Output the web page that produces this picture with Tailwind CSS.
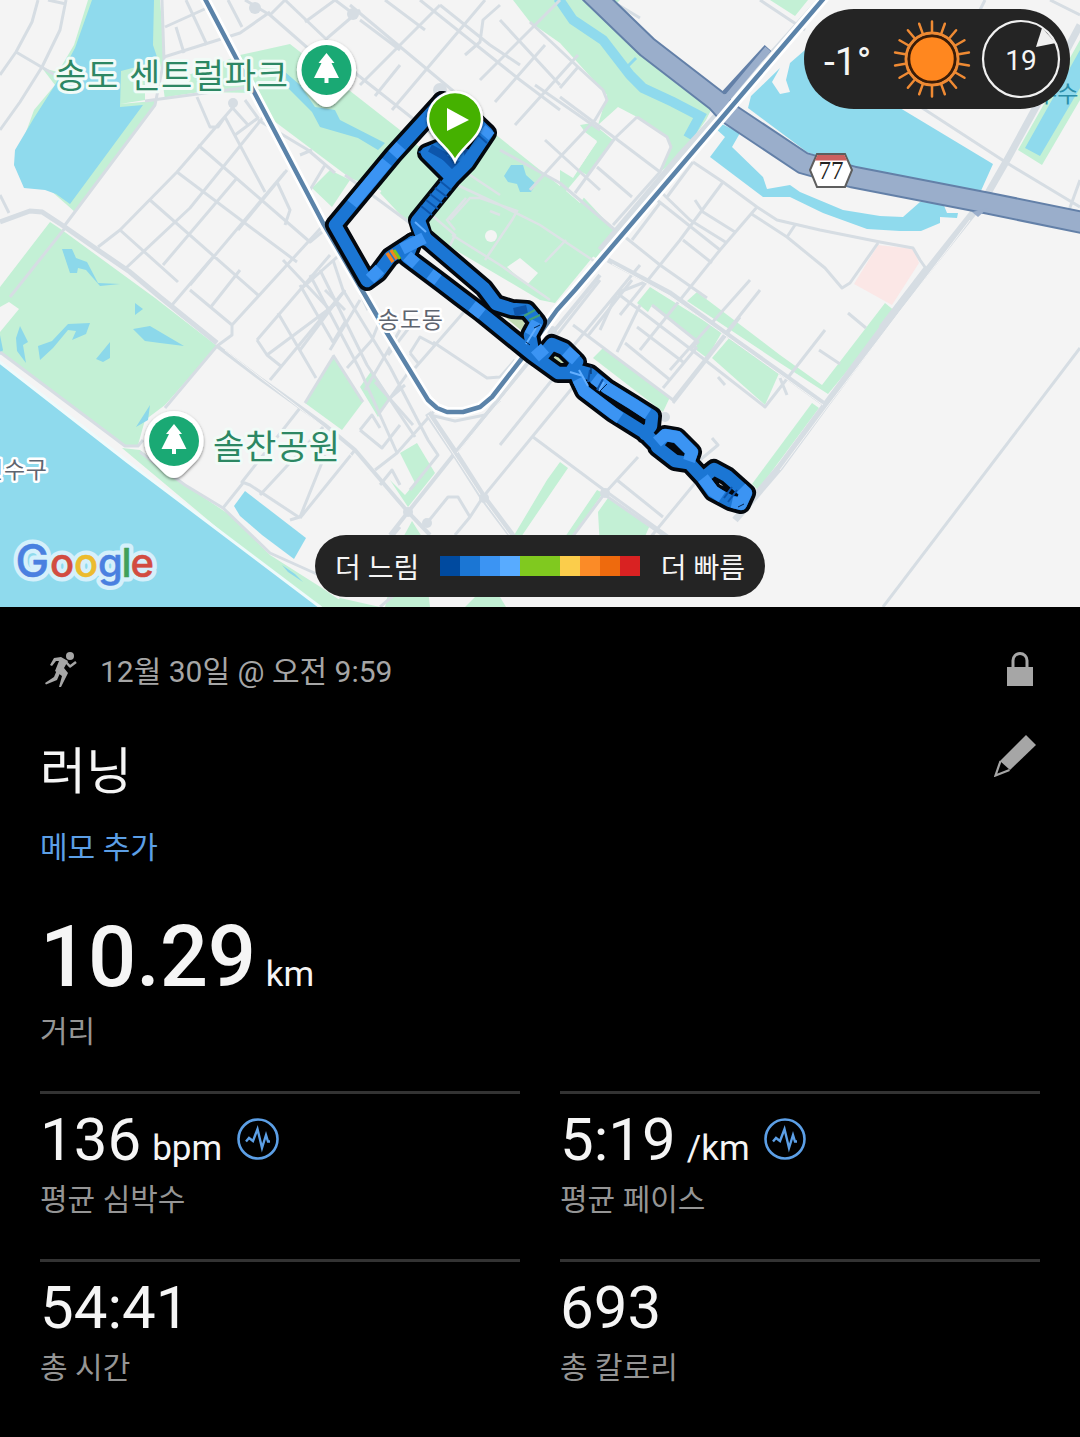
<!DOCTYPE html>
<html lang="ko">
<head>
    <meta charset="UTF-8">
    <meta name="viewport" content="width=device-width, initial-scale=1.0">
    <title>러닝</title>
    <script src="https://cdn.jsdelivr.net/npm/@tailwindcss/browser@4"></script>
</head>
<body class="bg-black text-[#f5f5f5] font-[Roboto,'Noto_Sans_CJK_KR',sans-serif]">

    <!-- MAP -->
    <section class="relative h-[607px] overflow-hidden bg-[#f4f4f4]">
        <svg class="block" width="1080" height="607" viewBox="0 0 1080 607" fill="none">
            <!-- parks -->
            <g fill="#c3f0d5">
                <path d="M88 0H160L165 60L155 106L75 212L50 190L14 165L34 110L55 85L42 68L58 72L74 45Z"/>
                <path d="M50 222L62 230L155 298L217 346L165 405L145 420L138 445L125 447L0 352V287Z"/>
                <path d="M122 448L140 450L185 485L230 515L270 555L322 588L350 607H312Z"/>
                <path d="M513 0L530 22L560 43L607 95L598 125L618 107L637 117L668 137L670 147L660 172L680 157L706 120L712 108L585 0Z"/>
                <path d="M155 88L240 55L290 44L400 130L440 165L490 130L615 230L555 303L540 300L435 238L418 215L380 190L350 178L270 118L258 93L200 92L160 98Z"/>
                <path d="M312 188L330 170L350 180L332 207Z M380 193L397 170L450 170L410 225Z"/>
                <path d="M575 0H620L600 20Z M770 0H808L795 16Z"/>
                <path d="M333 357L363 402L342 430L305 403Z M372 370L390 398L378 417L360 387Z"/>
                <path d="M400 453L417 443L435 473L408 507L390 480L405 495L415 483Z"/>
                <path d="M547 480L560 462L568 468L555 487L521 537H513Z"/>
                <path d="M597 490L603 493L572 537H565Z M608 498L630 511L650 525L640 548H600L598 512Z"/>
                <path d="M593 358L603 348L670 397L663 412Z"/>
                <path d="M637 303L650 287L722 332L707 358L695 349L698 342L652 305L648 312Z"/>
                <path d="M687 301L697 292L780 355L822 385L885 303L896 312L828 394L780 363Z"/>
                <path d="M712 358L730 337L780 371L765 405Z"/>
                <path d="M812 403L819 408L758 490L752 484Z"/>
                <path d="M580 125L592 123L613 140L575 192L560 182V170L573 178L597 141L585 132Z"/>
                <path d="M1018 150L1042 165L1080 100V40Z"/>
                <path d="M400 543L412 521L422 537L430 607H385Z M465 607L475 597H500L506 607Z M330 607L340 598L380 607Z"/>
                <path d="M560 172L616 232L596 258L560 238Z"/>
            </g>
            <path d="M878 245L914 249L919 263L892 305L854 284Z" fill="#fbe7e6"/>
            <g fill="#f4f4f4">
                <path d="M507 267L520 258L538 273L527 285Z M0 307L9 302L19 309L0 332Z"/>
                <circle cx="491" cy="236" r="6"/>
                <path d="M582 172L596 181L580 203L566 191Z M120 104L145 100V68L160 62L165 100Z"/>
                <path d="M560 150L583 133L597 142L573 177L560 168Z"/>
            </g>

            <!-- water -->
            <g fill="#8fdaed">
                <path d="M92 0H154L153 45L158 60L140 66L121 71L120 107L143 105L70 204L56 194L45 190L24 188L14 165L15 150L34 118L55 85L75 48Z"/>
                <path d="M-8 356L128 462L320 607L328 614H-8Z" stroke="#eefafb" stroke-width="3"/>
                <path d="M245 491L306 538L294 559L262 535L240 516L234 506Z"/>
                <path d="M805 50L790 63L786 80L790 92L780 94L772 82L780 68L751 96L748 108L807 152L853 170L980 193L993 164L900 108L860 60Z"/>
                <path d="M715 128L725 137L710 157L763 197L790 197L823 213L867 229L900 231H921L940 223V217L957 218L958 213L947 213L943 203L920 202L903 217L880 216L843 210L800 192L790 185L767 189L763 177L732 147L740 133L720 123Z"/>
                <path d="M1025 148L1040 156L1080 88V50Z"/>
            </g>
            <path d="M558 -2L573 20L603 40L630 75L643 88L673 102L700 116L688 138" stroke="#8fdaed" stroke-width="10"/>
            <path d="M628 66L636 58" stroke="#8fdaed" stroke-width="3"/>
            <g fill="#8cd8ea">
                <path d="M62 249H72L76 258L87 262L98 283L120 284L100 286L86 270L78 268L77 273H70Z"/>
                <path d="M16 338L20 326L28 342L23 345L26 363L17 351Z M38 346L52 341L68 324L90 323L86 334L72 340L76 331L68 330L53 348L40 360Z M96 359L110 342V358L103 362Z M133 329L150 326L184 346L160 343L145 341Z M135 303L143 309L135 315Z M136 427L150 405L148 420Z M0 335L3 350L0 355Z"/>
                <path d="M285 72L300 85L315 107L335 110L340 120L385 143L378 150L358 138L320 127L312 112L288 88Z"/>
                <path d="M504 176L511 165H523L526 175L536 184L531 192L520 192L517 184L508 182Z M282 565L295 574L303 582L288 572Z"/>
            </g>

            <!-- local roads -->
            <g stroke="#d6dde3" stroke-width="3" stroke-linejoin="round">
                <path d="M38 0L32 22L16 52L0 75M66 0L60 30L42 67L20 102L0 130M48 0L66 4M16 52L55 75M0 195L9 213"/>
                <path d="M162 0L164 60L155 105L65 225M165 27L207 8M186 0L207 45M176 27L184 53M164 57L240 33L270 12M145 101L250 87M228 0L242 27M245 0L270 15L310 50M270 15L285 0M285 0L325 38M305 22L335 0M335 0L355 15M360 10L325 40"/>
                <path d="M98 247L120 230L177 172L235 105M126 268L190 208L265 115M163 265L237 178M190 285L285 172M150 200L258 295M177 172L297 262M198 145L310 242L322 232M197 97L210 127H218L225 117L265 192M230 105L248 125M245 100L258 118L235 135M120 230L178 282M287 170L238 230M277 182L290 210L285 225"/>
                <path d="M258 120L308 150L335 173M345 175L410 223M300 155L312 150M325 165L310 190"/>
                <path d="M172 305L213 257M190 290L232 325V335L217 346L165 408M210 308L240 270M232 325L330 218M257 340L330 255M257 340L267 355L282 367M267 355L337 303M270 380L345 290M316 378L278 313M300 290L345 250"/>
                <path d="M300 285L333 342L345 322M310 275L360 370L397 453L435 410M320 270L367 365L415 437M333 260L343 290L390 367L428 440L438 455L410 490M345 290L300 350M360 300L330 350M333 357L305 403M333 355L363 402M347 368L372 340L380 320M365 390L400 330M378 415L410 370M390 398L405 385M360 430L372 415L380 428M360 430L382 448L400 425M375 470L397 453M380 485L392 470L400 485"/>
                <path d="M345 310L325 290M342 255L368 310M283 260L330 310M355 450L300 518M300 518L250 485L242 482L300 408M260 495L325 425M325 455L300 517L290 520M223 508L243 483"/>
                <path d="M375 382L413 425M388 355L415 320M433 342L487 378L500 377L515 360M415 368L477 297M410 353L420 337L435 345M410 353L418 363M483 497L573 387M533 437L600 487L680 545M427 523L448 497H458L470 517L483 497M470 517L455 535M430 415L455 421L485 415L500 400"/>
                <path d="M345 65L440 140M360 85L395 50L425 20L440 5M375 96L400 65M392 110L485 0M350 5L470 105M360 20L400 50M385 0L425 30M440 5L490 45M420 0L520 80L560 110M500 20L560 85M465 55L480 42L483 20L500 5M480 80L560 0M495 102L545 45M515 125L578 55M490 45L520 65M535 85L600 130"/>
                <path d="M560 88L578 67M530 22L578 67L603 90L607 100L595 120L560 157L530 190M560 97L615 138L660 172M637 117L667 137L671 147L660 172L613 225M637 117L615 138L575 193M597 167L632 197M560 183L615 230M500 150L560 183M545 140L600 190"/>
                <path d="M693 162L667 197M693 162L723 182L757 207L777 220L820 230L880 242L913 248L920 260L927 270M757 207L720 250L640 350M750 213L787 237L825 268L842 288L850 283L878 243M787 237L795 225M723 182L680 240L620 315M660 203L632 240M662 193L690 220L727 243M657 200L720 250M695 200L703 212L735 232M683 240L712 263M625 237L660 265L707 298M750 280L670 370"/>
                <path d="M617 293L705 360L765 407L825 330M640 305L617 352M573 325L673 400L760 290M632 280L587 337M625 343L670 380M637 327L683 362M697 347L663 388M652 305L698 342L690 350M740 317L673 403M725 385L718 377M848 313L866 328M819 350L840 364M787 395L780 378"/>
                <path d="M638 457L605 493L570 540M617 480L663 517M700 477L640 550M605 495L670 540M712 438L718 445L700 460M650 280L617 293L600 330M600 280L545 350M640 265L570 350M560 370L500 445"/>
                <path d="M910 100L1007 163L1080 207M1080 180L1068 213M985 0L980 10M1050 0L1080 15M610 0L640 18M760 0L793 22L805 30M880 327L925 268M1080 348L883 607"/>
                <path d="M65 228L10 297M0 352L125 446L138 446L143 440M140 452L185 485L223 508L270 553L330 580M385 545L400 527M380 607L400 590"/>
            </g>
            <g stroke="#d6dde3" stroke-width="6">
                <path d="M0 222L30 211L42 212L62 225L95 248L130 272L160 297L217 343" stroke-width="5"/>
                <path d="M217 346L262 380L325 425L355 450L408 512L430 535M390 535L408 512L455 453L518 375L600 275" stroke-width="4"/>
                <path d="M428 413L455 453L483 497L513 537" stroke-width="7"/>
                <path d="M608 260L670 293L735 340L780 372L823 403" stroke-width="5"/>
                <path d="M1080 25L1047 87L1007 160L984 200L973 213L900 305L827 403L780 467L735 520" stroke-width="7"/>
                <path d="M820 0L705 128L680 155L600 250" />
            </g>
            <path d="M428 415L483 499L511 537M612 264L670 296L823 405M970 220L827 407L780 470M225 350L325 428L405 512M457 453L520 377" stroke="#f4f4f4"/>
            <path d="M436 175L500 205L540 225L600 265M420 205L455 235L448 250M450 220L470 198H480L517 211L512 220L485 260M452 235L500 265L550 300M455 230L447 220L466 198M490 211L500 215M566 240L545 262M500 195L455 165" stroke="#dde3e6" stroke-width="2.5"/>
            <g fill="#d6dde3">
                <circle cx="255" cy="8" r="6"/><circle cx="353" cy="14" r="6"/><circle cx="233" cy="103" r="5"/><circle cx="440" cy="90" r="7"/><circle cx="605" cy="493" r="5"/><circle cx="408" cy="512" r="5"/><circle cx="484" cy="498" r="5"/><circle cx="665" cy="417" r="5"/><circle cx="552" cy="331" r="5"/><circle cx="427" cy="523" r="5"/>
            </g>

            <!-- highway -->
            <g stroke-linejoin="round">
                <path d="M712 100L724 96L768 48" stroke="#6380a8" stroke-width="9"/>
                <path d="M590 -8L647 47L717 101L728 113L803 163L853 177L987 203L1085 223" stroke="#6380a8" stroke-width="23"/>
                <path d="M712 101L728 97L768 49" stroke="#9aaecb" stroke-width="7"/>
                <path d="M590 -8L647 47L717 101L728 113L803 163L853 177L987 203L1085 223" stroke="#9aaecb" stroke-width="19"/>
                <path d="M972 212L978 217L988 208Z" fill="#9aaecb"/>
            </g>
            <!-- rail -->
            <g stroke-linejoin="round">
                <path d="M204 -3L323 223L362 290L387 333L428 400L437 408L447 412H463L480 407L492 397L523 357L557 310L575 290L825 -3" stroke="#fff" stroke-width="10"/>
                <path d="M204 -3L323 223L362 290L387 333L428 400L437 408L447 412H463L480 407L492 397L523 357L557 310L575 290L825 -3" stroke="#5b83a9" stroke-width="4.5"/>
            </g>

            <!-- ground seen through the route loops -->
            <path d="M505 317L525 318L523 332Z M552 352L568 360L562 366L550 360Z M664 444L680 452L674 457L664 450Z" fill="#c3dcb4"/>
            <!-- route outline, body -->
            <g stroke-linejoin="round" stroke-linecap="round">
                <g stroke="#04080e" stroke-width="20">
                    <path d="M442 101L393 155L335 225L367 281L378 273L390 257L413 242"/>
                    <path d="M442 101L470 117L487 133L467 163L452 178L427 153L440 148L458 155M452 178L418 220L423 236L484 288L496 304L512 309L527 310L537 322L530 335L533 352"/>
                    <path d="M413 242L407 257L443 284L460 297L480 312L533 355L558 373L570 373L577 362L564 349L552 344L543 355M575 370L590 374L607 388L633 404L652 416L651 426L645 434M575 372L584 391L613 413L645 433L657 445L665 435L677 437L692 452L688 463L675 461L657 447M690 464L703 478L714 469L727 476L746 493L741 504L730 501L713 492L703 478"/>
                </g>
                <path d="M418 152L440 140L470 150L452 172Z" fill="#0d55ab"/>
                <g stroke="#1b76d4" stroke-width="12.5">
                    <path d="M442 101L393 155L335 225L367 281L378 273L390 257L413 242"/>
                    <path d="M442 101L470 117L487 133L467 163L452 178L427 153L440 148L458 155M452 178L418 220L423 236L484 288L496 304L512 309L527 310L537 322L530 335L533 352"/>
                    <path d="M413 242L407 257L443 284L460 297L480 312L533 355L558 373L570 373L577 362L564 349L552 344L543 355M575 370L590 374L607 388L633 404L652 416L651 426L645 434M575 372L584 391L613 413L645 433L657 445L665 435L677 437L692 452L688 463L675 461L657 447M690 464L703 478L714 469L727 476L746 493L741 504L730 501L713 492L703 478"/>
                    <path d="M418 222L424 238" stroke-width="15"/>
                </g>
            </g>
            <!-- faster stretches -->
            <g stroke="#3b94f3" stroke-width="12" stroke-linejoin="round">
                <path d="M401 146L393 155M387 162L352 204M370 279L380 269M402 249L424 238M407 256L416 264M430 274L438 280M472 306L482 314M535 357L545 348M566 351L576 360M594 378L607 388L633 404L648 414M578 379L584 391L613 413L620 418M657 442L665 435L677 437L692 452L689 461M703 478L713 491L722 497M732 502L741 504L746 493L741 488M490 129L484 136M537 322L530 335"/>
            </g>
            <g stroke="#0d55ab" stroke-width="2">
                <path d="M435 188L447 197M430 194L442 203M426 200L438 209M421 206L432 215M440 181L451 190M477 134L487 143M432 150L450 158M590 370L588 382M603 379L597 390M732 487L724 498M737 490L728 502"/>
                <path d="M430 148L446 157M514 312L527 309" stroke-width="8"/>
            </g>
            <path d="M579 370L588 386M604 382L599 391M526 344L536 328M570 372L583 376M415 222L426 232" stroke="#62aeff" stroke-width="2"/>
            <path d="M387 253L393 262M391 250L397 259" stroke="#f5821f" stroke-width="3.5"/>
            <path d="M394 250L400 259" stroke="#7ec41d" stroke-width="3"/>
            <path d="M524 316L535 310M529 320L540 315" stroke="#3fa07c" stroke-width="2"/>
            <path d="M591 365V374M534 328L540 325M526 342L530 345M738 507L744 504M599 392L607 384" stroke="#06264f" stroke-width="1"/>

            <!-- route 77 shield -->
            <path d="M817 154H845L852 170L845 187H817L810 170Z" fill="#fff" stroke="#5e5e5e" stroke-width="2"/>
            <path d="M817.500 155H844.500L847 160.500H815Z" fill="#cc6060"/>
            <text x="831" y="179" text-anchor="middle" font-family="Liberation Serif, serif" font-size="25" fill="#222">77</text>

            <!-- place labels -->
            <g font-family="'Noto Sans CJK KR', sans-serif" stroke-linejoin="round" paint-order="stroke">
                <g fill="#2c8763" stroke="#f1fbf7" stroke-width="6" font-size="34">
                    <text x="55" y="88" textLength="233">송도 센트럴파크</text>
                    <text x="213" y="459" textLength="127">솔찬공원</text>
                </g>
                <g fill="#5f6570" stroke="#fff" stroke-width="5" font-size="23">
                    <text x="378" y="328" textLength="65">송도동</text>
                    <text x="-18" y="478" textLength="65">연수구</text>
                </g>
                <text x="1036" y="102" font-size="23" fill="#2b8ea8">수수</text>
            </g>

            <!-- park pins -->
            <defs>
                <filter id="shade" x="-30%" y="-30%" width="160%" height="160%">
                    <feDropShadow dx="0" dy="1.500" stdDeviation="1.800" flood-color="#000" flood-opacity=".5"/>
                </filter>
                <g id="park">
                    <path d="M0 -30A30 30 0 0 1 22 20L9 33Q0 41 -9 33L-22 20A30 30 0 0 1 0 -30Z" fill="#fff" filter="url(#shade)"/>
                    <circle r="25" fill="#1aa974"/>
                    <path d="M0 -17L8 -7H5L12.500 8H2V13H-2V8H-12.500L-5 -7H-8Z" fill="#fff"/>
                </g>
            </defs>
            <use href="#park" x="326.500" y="70"/>
            <use href="#park" x="174" y="441"/>

            <!-- start pin -->
            <path d="M455 161C449 147 428 137 428 119A27 27 0 0 1 482 119C482 137 461 147 455 161Z" fill="#45b104" stroke="#fff" stroke-width="2.500" filter="url(#shade)"/>
            <path d="M447 108L469 120L447 131Z" fill="#fff"/>

            <!-- map attribution -->
            <g font-family="Inter, sans-serif" font-size="40" font-weight="500" stroke-linejoin="round">
                <g fill="#d5f0fb" stroke="#d5f0fb" stroke-width="9">
                    <text y="577"><tspan x="15.500" font-size="45">G</tspan><tspan x="50">o</tspan><tspan x="74">o</tspan><tspan x="98">g</tspan><tspan x="121.500">l</tspan><tspan x="130.500">e</tspan></text>
                </g>
                <g stroke-width=".5">
                    <text x="15.500" y="577" font-size="45" fill="#4a80e0" stroke="#4a80e0">G</text>
                    <text x="50" y="577" fill="#d24c40" stroke="#d24c40">o</text>
                    <text x="74" y="577" fill="#ecbb2e" stroke="#ecbb2e">o</text>
                    <text x="98" y="577" fill="#4a80e0" stroke="#4a80e0">g</text>
                    <text x="121.500" y="577" fill="#41a05a" stroke="#41a05a">l</text>
                    <text x="130.500" y="577" fill="#d24c40" stroke="#d24c40">e</text>
                </g>
            </g>
        </svg>

        <!-- WEATHER -->
        <div class="absolute top-[9px] right-[10px] w-[266px] h-[100px] rounded-full bg-[#242424] flex items-center pl-5">
            <span class="w-[69px] pt-[6px] text-[39px] leading-none whitespace-nowrap">-1°</span>
            <svg class="shrink-0" width="78" height="80" viewBox="-39 -40 78 80" fill="none">
                <circle r="26" stroke="#ef8a33" stroke-width="3"/>
                <circle r="23" fill="#ff871f" stroke="#3c1c06" stroke-width="2.500"/>
                <path id="rays" stroke="#ef8a33" stroke-width="2.500" stroke-linecap="round"/>
            </svg>
            <svg class="ml-[10px] shrink-0" width="80" height="80" viewBox="0 0 80 80" fill="none">
                <circle cx="40" cy="40" r="38" stroke="#f0f0f0" stroke-width="2.200"/>
                <path d="M61 9L75 24L55 28Z" fill="#f0f0f0"/>
                <text x="40" y="51" text-anchor="middle" font-family="Roboto, sans-serif" font-size="28" fill="#f5f5f5">19</text>
            </svg>
        </div>

        <!-- PACE LEGEND -->
        <div class="absolute left-[315px] bottom-[10px] w-[450px] h-[62px] rounded-full bg-[#242424] flex items-center justify-between px-5 text-[28px] leading-none">
            <span class="pt-[5px]">더 느림</span>
            <div class="flex h-5 w-[200px]">
                <i class="w-5 bg-[#004a9f]"></i><i class="w-5 bg-[#1b76d4]"></i><i class="w-5 bg-[#3b94f3]"></i><i class="w-5 bg-[#58abff]"></i><i class="w-10 bg-[#80c91f]"></i><i class="w-5 bg-[#fbcd4b]"></i><i class="w-5 bg-[#fb8b27]"></i><i class="w-5 bg-[#ee6a0d]"></i><i class="w-5 bg-[#d92222]"></i>
            </div>
            <span class="pt-[5px]">더 빠름</span>
        </div>
    </section>

    <!-- ACTIVITY -->
    <main class="px-10 pt-10">
        <header class="flex items-center h-12 text-[#a6a6a6]">
            <svg class="ml-1 -mt-1 w-[34px] h-9" viewBox="0 0 34 36" fill="none" stroke="currentColor" stroke-linejoin="round">
                <circle cx="26" cy="5" r="4" fill="currentColor" stroke="none"/>
                <path d="M10 7L17 6L24 10L20 17L24 22L17 36L15 36L18 25L11 20L15 10L12 10L8 15L6 14Z" fill="currentColor" stroke="none"/>
                <path d="M21 10L26 15.500L32 11" stroke-width="2.500"/>
                <path d="M13 19L10 26L1 32L2 33.500L13 29L16 22Z" fill="currentColor" stroke="none"/>
            </svg>
            <span class="ml-[22px] pt-px text-[30px] leading-none whitespace-nowrap">12월 30일 @ 오전 9:59</span>
            <svg class="ml-auto -mt-1 mr-[7px] w-[26px] h-[34px]" viewBox="0 0 26 34" fill="none">
                <path d="M0 15H26V34H0Z" fill="currentColor"/>
                <path d="M6 16V8.500A7 7 0 0 1 20 8.500V16" stroke="currentColor" stroke-width="3"/>
            </svg>
        </header>

        <div class="mt-[41px] flex justify-between h-[72px]">
            <h1 class="text-[50px] leading-[72px]">러닝</h1>
            <svg class="mr-1 -mt-px w-[42px] h-[42px]" viewBox="0 0 42 42" fill="none">
                <path d="M32 0L42 10L16 35L6 26Z" fill="#a6a6a6"/>
                <path d="M6.500 26L1.500 40.500L15.500 35" stroke="#a6a6a6" stroke-width="2.200"/>
            </svg>
        </div>
        <a href="#" class="block mt-5 text-[30px] leading-10 text-[#5c9fe6]">메모 추가</a>

        <div class="mt-[42px] h-[181px]">
            <p class="flex items-baseline gap-[10px] h-[94px] leading-[94px]">
                <span class="text-[85px] font-medium tracking-[-0.2px]">10.29</span><span class="text-[35px]">km</span>
            </p>
            <p class="mt-2 text-[30px] leading-10 text-[#959595]">거리</p>
        </div>

        <div class="grid grid-cols-2 gap-x-10">
            <div class="h-[168px] border-t-3 border-[#333] pt-[10px]">
                <p class="flex items-baseline gap-[11px] h-[73px] leading-[72px]">
                    <span class="text-[60px]">136</span><span class="text-[35px]">bpm</span>
                    <svg class="self-start mt-[14px] ml-1 w-[42px] h-[42px]" viewBox="0 0 42 42" fill="none" stroke="#5c9fe6"><circle cx="21" cy="21" r="19.500" stroke-width="2.600"/><path d="M9 23.500L12 20L16 23L20.500 11L25 30L29 17L31 23.500H33" stroke-width="2.400"/></svg>
                </p>
                <p class="text-[30px] leading-[46px] text-[#959595]">평균 심박수</p>
            </div>
            <div class="h-[168px] border-t-3 border-[#333] pt-[10px]">
                <p class="flex items-baseline gap-[11px] h-[73px] leading-[72px]">
                    <span class="text-[60px]">5:19</span><span class="text-[35px]">/km</span>
                    <svg class="self-start mt-[14px] ml-[3px] w-[42px] h-[42px]" viewBox="0 0 42 42" fill="none" stroke="#5c9fe6"><circle cx="21" cy="21" r="19.500" stroke-width="2.600"/><path d="M9 23.500L12 20L16 23L20.500 11L25 30L29 17L31 23.500H33" stroke-width="2.400"/></svg>
                </p>
                <p class="text-[30px] leading-[46px] text-[#959595]">평균 페이스</p>
            </div>
            <div class="h-[168px] border-t-3 border-[#333] pt-[10px]">
                <p class="text-[60px] h-[73px] leading-[72px]">54:41</p>
                <p class="text-[30px] leading-[46px] text-[#959595]">총 시간</p>
            </div>
            <div class="h-[168px] border-t-3 border-[#333] pt-[10px]">
                <p class="text-[60px] h-[73px] leading-[72px]">693</p>
                <p class="text-[30px] leading-[46px] text-[#959595]">총 칼로리</p>
            </div>
        </div>
    </main>

    <script>
        // 18 rays around the sun
        let d = '';
        for (let i = 0; i < 18; i++) {
            const a = i * Math.PI / 9 - Math.PI / 2;
            d += `M${Math.cos(a) * 27} ${Math.sin(a) * 27}L${Math.cos(a) * 37.5} ${Math.sin(a) * 37.5}`;
        }
        document.getElementById('rays').setAttribute('d', d);
    </script>

</body>
</html>
